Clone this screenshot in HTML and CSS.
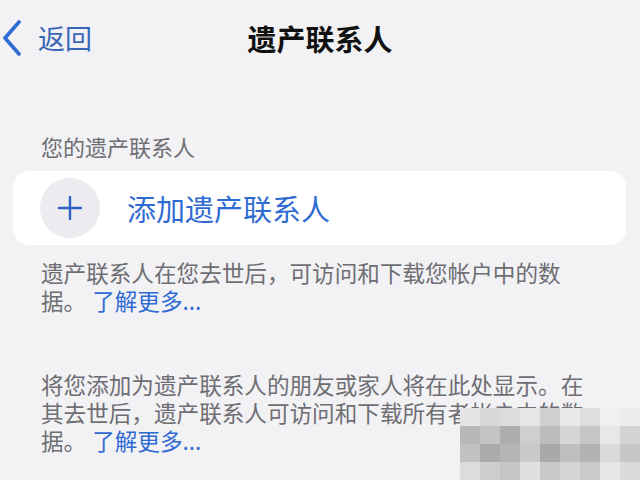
FILE: index.html
```html
<!DOCTYPE html>
<html lang="zh-CN">
<head>
<meta charset="utf-8">
<title>遗产联系人</title>
<link rel="stylesheet" href="styles.css">
</head>
<body>
<div class="screen">
  <header class="nav">
    <a class="back" href="#">
      <svg class="chev" width="22" height="36" viewBox="0 0 22 36"><path d="M18 2 L4 18 L18 34" fill="none" stroke="#2f6bd3" stroke-width="3.6" stroke-linecap="round" stroke-linejoin="round"/></svg>
      <span class="back-text">返回</span>
    </a>
    <h1 class="title">遗产联系人</h1>
    <span class="spacer"></span>
  </header>

  <p class="section-label">您的遗产联系人</p>

  <div class="card">
    <span class="plus-circle">
      <svg width="24" height="24" viewBox="0 0 24 24"><path d="M12 1 V23 M1 12 H23" stroke="#2f5fc0" stroke-width="2.4" stroke-linecap="round"/></svg>
    </span>
    <span class="card-text">添加遗产联系人</span>
  </div>

  <p class="note note-first">遗产联系人在您去世后，可访问和下载您帐户中的数据。<a class="link" href="#">了解更多...</a></p>

  <p class="note note-second">将您添加为遗产联系人的朋友或家人将在此处显示。在其去世后，遗产联系人可访问和下载所有者帐户中的数据。<a class="link" href="#">了解更多...</a></p>

  <div class="mosaic">
    <i style="background:#e4e4e4"></i><i style="background:#d8d8d8"></i><i style="background:#dcdcdc"></i><i style="background:#e6e6e6"></i><i style="background:#d0d0d0"></i><i style="background:#e9e9e9"></i><i style="background:#dedede"></i><i style="background:#f0f0f0"></i><i style="background:#ececec"></i>
    <i style="background:#b8b8b8"></i><i style="background:#c4c4c4"></i><i style="background:#aeaeae"></i><i style="background:#cfcfcf"></i><i style="background:#bdbdbd"></i><i style="background:#d6d6d6"></i><i style="background:#c6c6c6"></i><i style="background:#e8e8e8"></i><i style="background:#d3d3d3"></i>
    <i style="background:#c2c2c2"></i><i style="background:#ababab"></i><i style="background:#b5b5b5"></i><i style="background:#c9c9c9"></i><i style="background:#a9a9a9"></i><i style="background:#bfbfbf"></i><i style="background:#b3b3b3"></i><i style="background:#dadada"></i><i style="background:#c7c7c7"></i>
    <i style="background:#dcdcdc"></i><i style="background:#cdcdcd"></i><i style="background:#c5c5c5"></i><i style="background:#e0e0e0"></i><i style="background:#c8c8c8"></i><i style="background:#d4d4d4"></i><i style="background:#cacaca"></i><i style="background:#e6e6e6"></i><i style="background:#dbdbdb"></i>
  </div>
</div>
</body>
</html>
```

FILE: styles.css
```css
* { box-sizing: border-box; }

html, body {
  margin: 0;
  padding: 0;
  background: #f2f2f5;
}

body {
  font-family: "Noto Sans CJK SC", "Noto Sans", sans-serif;
  color: #000;
}

.screen {
  position: relative;
  width: 640px;
  height: 480px;
  overflow: hidden;
  background: #f2f2f5;
}

.nav {
  display: grid;
  grid-template-columns: 1fr auto 1fr;
  align-items: center;
  height: 78px;
  padding-bottom: 2px;
}

.back {
  display: flex;
  align-items: center;
  gap: 15px;
  padding-left: 1px;
  text-decoration: none;
  color: #2f6bd3;
}

.chev { display: block; }

.back-text {
  font-size: 27px;
  line-height: 36px;
  color: #3a66b8;
}

.title {
  margin: 0;
  font-size: 29px;
  line-height: 36px;
  font-weight: 700;
  color: #111;
}

.section-label {
  margin: 53px 0 0 41px;
  font-size: 22px;
  line-height: 30px;
  color: #6e6e73;
}

.card {
  display: flex;
  align-items: center;
  gap: 27px;
  margin: 10px 14px 0 13px;
  height: 74px;
  padding-left: 27px;
  background: #ffffff;
  border-radius: 16px;
}

.plus-circle {
  display: flex;
  align-items: center;
  justify-content: center;
  width: 60px;
  height: 60px;
  border-radius: 50%;
  background: #ececf0;
}

.card-text {
  font-size: 29px;
  line-height: 36px;
  color: #2f6bd3;
}

.note {
  margin: 0 44px 0 41px;
  font-size: 22.6px;
  line-height: 28px;
  color: #6e6e73;
}

.note-first { margin-top: 14px; }
.note-second { margin-top: 56px; }

.link {
  display: inline-block;
  line-height: 28px;
  margin-left: 6px;
  color: #2f6bd3;
  text-decoration: none;
}

.mosaic {
  position: absolute;
  left: 460px;
  top: 408px;
  width: 180px;
  height: 72px;
  display: grid;
  grid-template-columns: repeat(9, 1fr);
  grid-template-rows: repeat(4, 1fr);
}

.mosaic i { display: block; }
```
